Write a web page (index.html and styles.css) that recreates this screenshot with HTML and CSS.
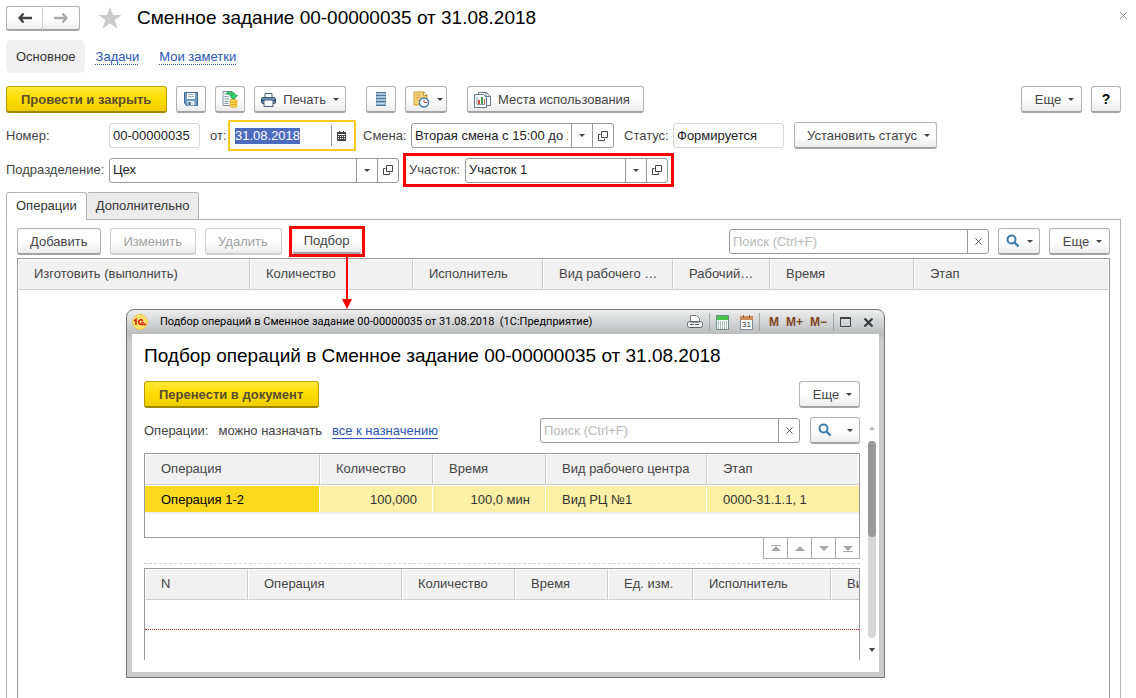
FILE: index.html
```html
<!DOCTYPE html>
<html lang="ru">
<head>
<meta charset="utf-8">
<title>Сменное задание 00-00000035 от 31.08.2018</title>
<link rel="stylesheet" href="styles.css">
</head>
<body>
<svg class="sprite" aria-hidden="true">
  <symbol id="i-open" viewBox="0 0 10 10"><path d="M3.500 .5h6v6h-6zM2.500 3.500h-2v6h6v-2" fill="none" stroke="#444"/></symbol>
  <symbol id="i-search" viewBox="0 0 14 14"><circle cx="5.500" cy="5.500" r="4" fill="none" stroke="#3a7cab" stroke-width="2"/><path d="M8.500 8.500l4 4" stroke="#3a7cab" stroke-width="2.400"/></symbol>
</svg>

<main class="form">
  <header class="head">
    <div class="history">
      <button class="btn back" aria-label="Назад"><svg width="14" height="10" viewBox="0 0 14 10"><path d="M5.500 .5L1.500 5l4 4.500M1.500 5H14" fill="none" stroke="#444" stroke-width="2.400"/></svg></button>
      <button class="btn forward" aria-label="Вперед"><svg width="14" height="10" viewBox="0 0 14 10"><path d="M8.500 .5l4 4.500-4 4.500M12.500 5H0" fill="none" stroke="#aaa" stroke-width="2.400"/></svg></button>
    </div>
    <svg class="star" width="24" height="22" viewBox="0 0 24 22"><path d="M12 0l3 8h8.500l-6.800 5 2.600 8.500L12 16.500l-7.300 5L7.300 13 .5 8H9z" fill="#cbcbcb"/></svg>
    <h1>Сменное задание 00-00000035 от 31.08.2018</h1>
    <button class="close" aria-label="Закрыть"><svg width="7" height="7" viewBox="0 0 7 7"><path d="M0 0l7 7M7 0L0 7" stroke="#999"/></svg></button>
  </header>

  <nav class="sections">
    <span class="current">Основное</span>
    <a href="#tasks">Задачи</a>
    <a href="#notes">Мои заметки</a>
  </nav>

  <div class="toolbar">
    <button class="btn primary">Провести и закрыть</button>
    <button class="btn icon" aria-label="Записать"><svg width="14" height="14" viewBox="0 0 14 14"><path d="M.5.5h13v13h-11l-2-2z" fill="#6d9cc4" stroke="#3f6a91"/><path d="M3 1h8v6H3z" fill="#fff"/><path d="M4 2.500h6M4 4.500h6" stroke="#8db4d4"/><path d="M3.500 9h7v4.500h-7z" fill="#dce8f2"/><path d="M4.500 10h2v3h-2z" fill="#365d80"/></svg></button>
    <button class="btn icon" aria-label="Провести"><svg width="16" height="17" viewBox="0 0 16 17"><path d="M1 .5h9v14H1z" fill="#fff" stroke="#7f93a5"/><path d="M2.500 3h4M2.500 5.500h4M2.500 8h5M2.500 10.500h4M2.500 12.500h4" stroke="#7f93a5"/><path d="M5 1.200h5q3 0 3 3h2.500L11.500 9 7.600 4.200h2.600q0-1-1-1H5z" fill="#2bcf6c" stroke="#15994a" stroke-width=".7"/><rect x="8" y="8.500" width="7" height="3.500" rx="1.500" fill="#ffd84e" stroke="#d29a13" stroke-width=".7"/><rect x="8" y="11" width="7" height="2.800" rx="1.400" fill="#ffd84e" stroke="#d29a13" stroke-width=".7"/><rect x="8" y="13.400" width="7" height="2.800" rx="1.400" fill="#ffd84e" stroke="#d29a13" stroke-width=".7"/></svg></button>
    <button class="btn menu"><svg width="15" height="14" viewBox="0 0 15 14"><path d="M4 5V.5h7V5" fill="#fff" stroke="#44617c"/><rect x=".5" y="4.500" width="14" height="6" rx="1.500" fill="#6b93b8" stroke="#36536f"/><path d="M3 7h9v6.500H3z" fill="#fff" stroke="#44617c"/><path d="M0 7.500h3M12 7.500h3" stroke="#263f57"/></svg>Печать</button>
    <button class="btn icon apart" aria-label="Список"><svg width="10" height="14" viewBox="0 0 10 14"><path d="M0 0h10v14H0z" fill="#8db1cd"/><path d="M0 .5h10M0 3.500h10M0 6.500h10M0 9.500h10M0 13.500h10" stroke="#4f7897"/><path d="M1 2h8M1 5h8M1 8h8M1 11.500h8" stroke="#c7dbe9"/></svg></button>
    <button class="btn menu iconmenu" aria-label="Создать на основании"><svg width="17" height="17" viewBox="0 0 17 17"><path d="M1 1h10l3 3v10H1z" fill="#f7d37c" stroke="#c89b3c"/><path d="M10.500 1v3.500H14" fill="#fff" stroke="#c89b3c"/><path d="M3 4h5M3 6.500h5M3 9h3" stroke="#d3a950"/><circle cx="11" cy="11.500" r="4.500" fill="#fff" stroke="#3d78ad" stroke-width="1.400"/><path d="M11 8.500v3h3" fill="none" stroke="#d8403a"/></svg></button>
    <button class="btn apart"><svg width="17" height="16" viewBox="0 0 17 16"><path d="M4.500.5h8l4 4v9h-12z" fill="#fff" stroke="#66798a"/><path d="M.5 2.500h9l3 3v10H.5z" fill="#fff" stroke="#66798a"/><path d="M12 .5v4h4" fill="none" stroke="#66798a"/><path d="M3 5v7.500h8" fill="none" stroke="#8797a5"/><path d="M4 8h2v4H4z" fill="#de4a42"/><path d="M7 5h2v7H7z" fill="#3ba55a"/><path d="M10 7h1v5h-1z" fill="#de4a42"/></svg>Места использования</button>
    <span class="push"></span>
    <button class="btn menu more">Еще</button>
    <button class="btn icon help">?</button>
  </div>

  <div class="fields">
    <label class="first" for="number">Номер:</label>
    <input class="box number" id="number" value="00-00000035" readonly>
    <label class="from" for="date">от:</label>
    <span class="date"><input id="date" value="31.08.2018"><button aria-label="Календарь"><svg width="9" height="10" viewBox="0 0 9 10"><path d="M0 1h9v9H0z" fill="#444"/><path d="M1 3.500h7" stroke="#fff"/><path d="M1 5.500h7M1 7.500h7" stroke="#fff" stroke-dasharray="1 1"/><path d="M2.500 0v2M6.500 0v2" stroke="#444"/></svg></button></span>
    <label class="shift-label" for="shift">Смена:</label>
    <span class="combo shift"><input id="shift" value="Вторая смена с 15:00 до 23:00"><button class="drop" aria-label="Выбрать"></button><button aria-label="Открыть"><svg width="10" height="10"><use href="#i-open"/></svg></button></span>
    <label class="status-label" for="status">Статус:</label>
    <input class="box status" id="status" value="Формируется" readonly>
    <button class="btn menu">Установить статус</button>
  </div>

  <div class="fields second">
    <label class="first" for="dept">Подразделение:</label>
    <span class="combo dept"><input id="dept" value="Цех"><button class="drop" aria-label="Выбрать"></button><button aria-label="Открыть"><svg width="10" height="10"><use href="#i-open"/></svg></button></span>
    <div class="area marked">
      <label for="area">Участок:</label>
      <span class="combo shift"><input id="area" value="Участок 1"><button class="drop" aria-label="Выбрать"></button><button aria-label="Открыть"><svg width="10" height="10"><use href="#i-open"/></svg></button></span>
    </div>
  </div>

  <div class="tabs" role="tablist">
    <button class="tab active" role="tab" aria-selected="true">Операции</button>
    <button class="tab" role="tab" aria-selected="false">Дополнительно</button>
  </div>

  <section class="panel">
    <div class="toolbar inner">
      <button class="btn">Добавить</button>
      <button class="btn" disabled>Изменить</button>
      <button class="btn" disabled>Удалить</button>
      <span class="pick marked"><button class="btn">Подбор</button>
        <svg class="arrow" width="11" height="52" viewBox="0 0 11 52"><path d="M5 0v44" stroke="#f00" stroke-width="2"/><path d="M0 42h10L5 52z" fill="#f00"/></svg></span>
      <span class="push"></span>
      <span class="combo search"><input aria-label="Поиск" placeholder="Поиск (Ctrl+F)"><button aria-label="Очистить"><svg width="7" height="7" viewBox="0 0 7 7"><path d="M.5 .5l6 6M6.500 .5l-6 6" stroke="#555"/></svg></button></span>
      <button class="btn menu iconmenu" aria-label="Найти"><svg width="14" height="14"><use href="#i-search"/></svg></button>
      <button class="btn menu more">Еще</button>
    </div>
    <div class="grid tall">
      <table>
        <colgroup><col style="width:232px"><col style="width:163px"><col style="width:130px"><col style="width:130px"><col style="width:97px"><col style="width:144px"><col></colgroup>
        <thead><tr><th>Изготовить (выполнить)</th><th>Количество</th><th>Исполнитель</th><th>Вид рабочего центра</th><th>Рабочий центр</th><th>Время</th><th>Этап</th></tr></thead>
      </table>
    </div>
  </section>
</main>

<div class="window" role="dialog" aria-label="Подбор операций">
  <div class="titlebar">
    <svg width="16" height="16" viewBox="0 0 16 16"><circle cx="8" cy="8" r="7.500" fill="#fbe36c" stroke="#e9c84a"/><path d="M2 6.800l2-1.300v5.500M10.800 6.800A2.300 2.300 0 1 0 8.700 10.400H14" fill="none" stroke="#d8201c" stroke-width="1.600"/><path d="M8.700 8.300H12" stroke="#d8201c" stroke-width="1"/></svg>
    <span class="caption">Подбор операций в Сменное задание 00-00000035 от 31.08.2018&nbsp; (1С:Предприятие)</span>
    <button aria-label="Печать"><svg width="16" height="16" viewBox="0 0 16 16"><path d="M3.500 7V1.500h6l3 3V7" fill="#fff" stroke="#707880"/><rect x=".5" y="7.500" width="15" height="6" rx="2" fill="#eef0f2" stroke="#5d666f"/><path d="M3 10.500h10M4 13.500h8" stroke="#59626b" stroke-dasharray="4 1"/><path d="M3.500 8.500h9" stroke="#8f979f"/></svg></button>
    <i class="sep"></i>
    <button aria-label="Калькулятор"><svg width="13" height="15" viewBox="0 0 13 15"><path d="M.5.5h12v14H.5z" fill="#fff" stroke="#6e8a84"/><path d="M1 1h11v4H1z" fill="#49c649"/><path d="M2 7h9M2 9h9M2 11h9M2 13h9" stroke="#4c7a70" stroke-dasharray="1 1"/></svg></button>
    <button class="calendar" aria-label="Календарь"><svg width="13" height="15" viewBox="0 0 13 15"><path d="M.5 1.500h12v13H.5z" fill="#fff" stroke="#7d8a96"/><path d="M0 1h13v4H0z" fill="#d08a55"/><path d="M3.500 0v3M9.500 0v3" stroke="#8f5a31"/><text x="6.500" y="12" class="day">31</text></svg></button>
    <i class="sep"></i>
    <button class="mem">M</button><button class="mem">M+</button><button class="mem">M−</button>
    <i class="sep"></i>
    <button aria-label="Развернуть"><svg width="11" height="10" viewBox="0 0 11 10"><path d="M.5 1h10v8.500H.5z" fill="none" stroke="#444"/><path d="M0 1h11" stroke="#444" stroke-width="2"/></svg></button>
    <button class="shut" aria-label="Закрыть"><svg width="9" height="9" viewBox="0 0 9 9"><path d="M.5 .5l8 8M8.500 .5l-8 8" stroke="#3c3c3c" stroke-width="2.200"/></svg></button>
  </div>
  <div class="client">
    <div class="content">
      <h2>Подбор операций в Сменное задание 00-00000035 от 31.08.2018</h2>
      <div class="toolbar">
        <button class="btn primary">Перенести в документ</button>
        <span class="push"></span>
        <button class="btn menu more">Еще</button>
      </div>
      <div class="toolbar filter">
        <span>Операции:</span><span>можно назначать</span><a href="#all">все к назначению</a>
        <span class="push"></span>
        <span class="combo search"><input aria-label="Поиск" placeholder="Поиск (Ctrl+F)"><button aria-label="Очистить"><svg width="7" height="7" viewBox="0 0 7 7"><path d="M.5 .5l6 6M6.500 .5l-6 6" stroke="#555"/></svg></button></span>
        <button class="btn menu iconmenu wide" aria-label="Найти"><svg width="14" height="14"><use href="#i-search"/></svg></button>
      </div>
      <div class="grid ops">
        <table>
          <colgroup><col style="width:175px"><col style="width:113px"><col style="width:113px"><col style="width:161px"><col></colgroup>
          <thead><tr><th>Операция</th><th>Количество</th><th>Время</th><th>Вид рабочего центра</th><th>Этап</th></tr></thead>
          <tbody><tr><td class="cell">Операция 1-2</td><td class="num">100,000</td><td class="num">100,0 мин</td><td>Вид РЦ №1</td><td>0000-31.1.1, 1</td></tr></tbody>
        </table>
      </div>
      <div class="pager">
        <button aria-label="В начало"><svg width="10" height="7" viewBox="0 0 10 7"><path d="M0 0h10v1H0zM5 1l5 5H0z" fill="#a5a5a5"/></svg></button>
        <button aria-label="Вверх"><svg width="10" height="7" viewBox="0 0 10 7"><path d="M5 1l5 5H0z" fill="#a5a5a5"/></svg></button>
        <button aria-label="Вниз"><svg width="10" height="7" viewBox="0 0 10 7"><path d="M0 1h10L5 6z" fill="#a5a5a5"/></svg></button>
        <button aria-label="В конец"><svg width="10" height="7" viewBox="0 0 10 7"><path d="M0 1h10L5 6zM0 6h10v1H0z" fill="#a5a5a5"/></svg></button>
      </div>
      <div class="grid picked">
        <table>
          <colgroup><col style="width:103px"><col style="width:154px"><col style="width:113px"><col style="width:93px"><col style="width:85px"><col style="width:138px"><col style="width:160px"></colgroup>
          <thead><tr><th>N</th><th>Операция</th><th>Количество</th><th>Время</th><th>Ед. изм.</th><th>Исполнитель</th><th>Вид рабочего центра</th></tr></thead>
        </table>
        <div class="required"></div>
      </div>
    </div>
    <div class="scroll"><i class="up"></i><div class="track"><div class="thumb"></div></div><i class="down"></i></div>
  </div>
</div>
<script src="script.js"></script>
</body>
</html>
```

FILE: styles.css
```css
* { box-sizing: border-box; }
html, body { height: 100%; }
body {
  margin: 0;
  overflow: hidden;
  position: relative;
  background: #fff;
  color: #444;
  font: 13px/16px "Liberation Sans", Arial, sans-serif;
}
button, input { font: inherit; color: inherit; margin: 0; }
button { background: none; border: 0; padding: 0; white-space: nowrap; display: inline-flex; align-items: center; justify-content: center; }
svg { display: block; flex: none; }
.sprite { position: absolute; width: 0; height: 0; }
.push { flex: 1; }

.form { height: 100%; display: flex; flex-direction: column; padding: 5px 15px 0 6px; }

.head { display: flex; align-items: center; height: 26px; }
.history { display: flex; }
.star { margin: 0 15px 0 18px; }
h1, h2 { margin: 0; font-size: 19px; line-height: 24px; font-weight: 400; color: #000; white-space: nowrap; }
.close { margin: 0 -6px 6px auto; }

.btn {
  height: 27px;
  padding: 1px 13px 0 12px;
  gap: 7px;
  border: 1px solid #b3b3b3;
  border-bottom: 2px solid #a3a3a3;
  border-radius: 3px;
  background: linear-gradient(#fff 50%, #ececec);
}
.btn:disabled { color: #a0a0a0; border-color: #d0d0d0; }
.btn.icon { width: 30px; padding: 0; }
.btn.menu { padding: 1px 6px 0 12px; }
.btn.menu.more { width: 61px; }
.btn.menu::after, .drop::after { content: ""; border: 3px solid transparent; border-top-color: #444; border-bottom: 0; }
.btn.menu svg { margin-left: -6px; }
.btn.iconmenu { width: 42px; padding: 0 6px; justify-content: space-between; }
.btn.iconmenu svg { margin-left: 1px; }
.btn.wide { width: 50px; }
.btn.help { color: #000; font-size: 14px; font-weight: 700; }
.btn.primary {
  padding: 1px 15px 0 14px;
  font-weight: 700;
  color: #5b4d2b;
  border-color: #c2a100 #b89a00 #a08600;
  background: linear-gradient(#ffe83a, #ffdd00 50%, #efcd00);
}
.history .btn { height: 25px; width: 37px; padding: 0; }
.back { border-radius: 3px 0 0 3px; border-right-color: #ccc; }
.forward { border-radius: 0 3px 3px 0; border-left: 0; }

.sections { display: flex; align-items: center; gap: 20px; height: 33px; margin-top: 9px; }
.sections .current { padding: 9px 9px 8px 10px; margin-right: -9px; border-radius: 5px; background: #f1f1f1; color: #333; }
a { color: #2a55b4; text-decoration: underline 1px; text-underline-offset: 3px; }
.sections a { text-decoration-style: dotted; padding-top: 1px; }

.toolbar { display: flex; align-items: center; gap: 9px; margin-top: 13px; }
.toolbar .apart { margin-left: 11px; }
.toolbar > .btn.apart:not(.icon) { padding: 1px 13px 0 6px; }

.fields { display: flex; align-items: center; height: 31px; margin-top: 7px; white-space: nowrap; }
.fields.second { height: 34px; margin-top: 2px; }
.first { width: 103px; }
.box, .combo { height: 25px; border: 1px solid #999; border-radius: 3px; background: #fff; color: #222; }
.box { border-color: #d4d4d4; padding: 0 3px; min-width: 0; }
.number { width: 91px; }
.from { width: 28px; padding-left: 10px; }
.date { display: flex; width: 128px; height: 31px; padding: 3px; border: 2px solid #fbc81e; }
.date input, .combo input { flex: 1; width: 0; min-width: 0; border: 0; padding: 0 3px; outline: 0; background: none; color: #222; }
.date input { padding: 0 2px; }
.date input::selection { background: #4c6ac0; color: #fff; }
.date button { width: 20px; border-left: 1px solid #999; }
.shift-label { width: 55px; padding-left: 7px; }
.combo { display: inline-flex; }
.combo button { width: 21px; border-left: 1px solid #999; }
.combo.shift { width: 203px; }
.combo.dept { width: 290px; }
.status-label { width: 59px; padding-left: 10px; }
.status { width: 111px; margin-right: 10px; }
.marked { border: 3px solid #f00; }
.area { display: flex; align-items: center; width: 271px; height: 34px; margin-left: 4px; padding: 0 3px; }
.area label { width: 56px; }

.tabs { display: flex; margin-top: 5px; position: relative; }
.tab { height: 28px; padding: 0 9px; border: 1px solid #b3b3b3; border-radius: 3px 3px 0 0; background: #ebebeb; color: #333; }
.tab + .tab { border-left: 0; }
.tab.active { background: #fff; border-bottom-color: #fff; }
.panel { flex: 1; min-height: 0; margin-top: -1px; padding: 6px 10px 0; border: 1px solid #b3b3b3; border-bottom: 0; display: flex; flex-direction: column; }
.toolbar.inner { margin: 0; height: 31px; }
.pick { position: relative; display: flex; margin: 0 -2px; }
.pick .btn { height: 25px; padding: 1px 11px 0; border-top: 0; border-left-color: #fff; border-right-color: #fff; }
.arrow { position: absolute; left: 50px; top: 28px; z-index: 2; }
.search { width: 260px; }
.search input::placeholder { color: #b8b8b8; opacity: 1; }

.grid { border: 1px solid #999; overflow: hidden; }
.grid.tall { flex: 1; margin-top: 1px; border-bottom: 0; }
table { width: 100%; table-layout: fixed; border-collapse: separate; border-spacing: 0; }
th { height: 31px; padding: 0 14px 2px 15px; font-weight: 400; text-align: left; background: #f1f1f1; border: 1px solid #fff; border-right-color: #ccc; border-bottom-color: #ccc; overflow: hidden; text-overflow: ellipsis; white-space: nowrap; }
th:last-child { border-right-color: #fff; }
td { height: 29px; padding: 1px 15px 0 16px; background: #fcf0a5; background-clip: padding-box; border-top: 1px solid #fff; border-bottom: 2px solid #eee; border-right: 1px solid #fff; color: #333; white-space: nowrap; }
td.cell { background-color: #fbd91f; color: #000; }
td.num { text-align: right; }
td:last-child { border-right: 0; }

.window {
  position: absolute;
  left: 126px;
  top: 309px;
  width: 759px;
  padding: 0 5px 5px;
  border: 1px solid #777;
  border-radius: 8px 8px 0 0;
  background: linear-gradient(#eee, #b9bbbd 24px, #c9cbcd 30px);
}
.titlebar { display: flex; align-items: center; height: 24px; font-size: 11px; color: #000; }
.caption { flex: 1; margin-left: 12px; white-space: nowrap; font-family: Roboto, "Liberation Sans", sans-serif; }
.titlebar .sep { width: 1px; height: 18px; margin: 0 6px; background: #a5a5a5; }
.titlebar .calendar { margin-left: 11px; }
.day { font-size: 8px; text-anchor: middle; fill: #333; }
.mem { color: #7d4522; font-weight: 700; font-size: 12px; margin-left: 7px; }
.sep + .mem { margin-left: 3px; }
.shut { margin: 0 6px 0 13px; }
.client { display: flex; gap: 8px; height: 338px; padding: 0 3px 0 12px; background: #fff; }
.content { flex: 1; min-width: 0; padding: 10px 0 12px; display: flex; flex-direction: column; }
.filter { gap: 10px; }
.client .toolbar.filter { margin-top: 9px; }
.grid.ops { height: 85px; flex: none; margin-top: 9px; }
.pager { display: flex; justify-content: flex-end; padding-bottom: 4px; margin-top: -1px; border-bottom: 1px dashed #d4d4d4; }
.pager button { width: 25px; height: 22px; margin-left: -1px; border: 1px solid #aaa; }
.grid.picked { flex: 1; margin-top: 4px; border-bottom: 0; }
.picked table { width: 846px; }
.picked th:last-child { text-overflow: clip; }
.required { height: 30px; border-bottom: 1px dotted #b22; }
.scroll { display: flex; flex-direction: column; align-items: center; width: 8px; padding: 92px 0 20px; }
.up, .down { border: 3px solid transparent; }
.up { border-top: 0; border-bottom: 4px solid #bbb; }
.down { border-bottom: 0; border-top: 4px solid #444; }
.track { flex: 1; width: 8px; margin: 11px 0 10px; border-radius: 4px; background: #d6d6d6; }
.thumb { height: 96px; border-radius: 4px; background: #999; }
```

FILE: script.js
```js
const date = document.getElementById("date");
date.focus({ preventScroll: true });
date.select();
```
